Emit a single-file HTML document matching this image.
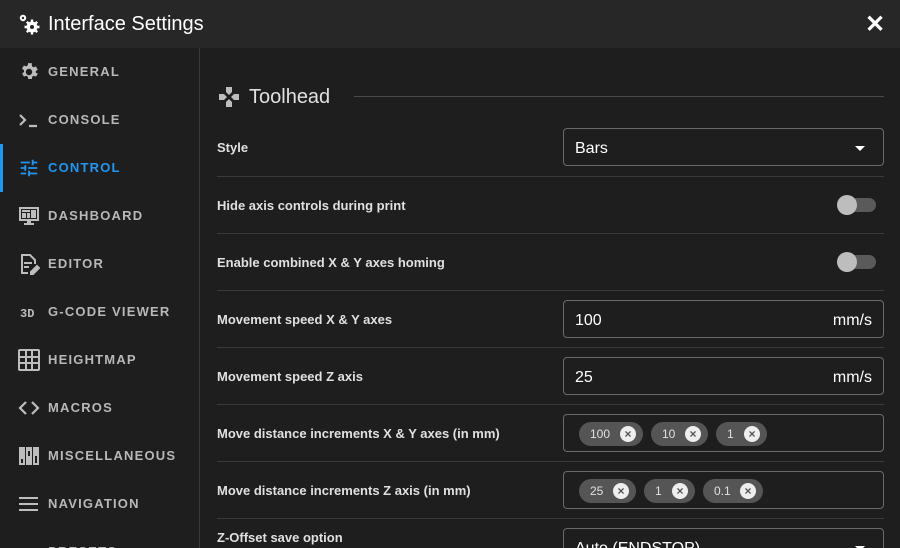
<!DOCTYPE html><html><head><style>
*{box-sizing:border-box;margin:0;padding:0}
html,body{width:900px;height:548px;overflow:hidden}
body{background:#1e1e1e;font-family:"Liberation Sans",sans-serif;color:#fff;position:relative}
.hdr{position:absolute;left:0;top:0;width:900px;height:48px;background:#272727}
.hdr .t{position:absolute;left:48px;top:13px;font-size:20px;color:#fff}
.side{position:absolute;left:0;top:48px;width:200px;height:500px;border-right:1px solid #3a3a3a;overflow:hidden}
.it{position:absolute;left:0;width:200px;height:48px}
.it span{position:absolute;left:48px;top:16px;font-size:13px;font-weight:bold;letter-spacing:1.2px;color:#b8b8b8}
.it svg{position:absolute;left:18px;top:13px}
.act span{color:#2196f3}
.act:before{content:"";position:absolute;left:0;top:0;width:3px;height:48px;background:#2196f3}
.row{position:absolute;left:217px;width:667px;height:57px;border-top:1px solid #3a3a3a}
.row .l{position:absolute;left:0;top:21px;font-size:13px;font-weight:bold;color:#e0e0e0}
.inp{position:absolute;left:346px;top:9px;width:321px;height:38px;border:1px solid #6a6a6a;border-radius:4px;font-size:16px;color:#fff}
.inp .v{position:absolute;left:11px;top:11px}
.inp .u{position:absolute;right:11px;top:11px}
.tog{position:absolute;left:621px;top:21px;width:38px;height:14px;border-radius:7px;background:#5a5a5a}
.tog:after{content:"";position:absolute;left:-1px;top:-3px;width:20px;height:20px;border-radius:50%;background:#bdbdbd}
.chip{position:absolute;top:7px;height:24px;border-radius:12px;background:#555;font-size:12px;color:#e0e0e0;padding:5px 0 0 11px}
.chip i{position:absolute;right:7px;top:4px;width:16px;height:16px;border-radius:50%;background:#eee;color:#555;font-style:normal;font-weight:bold;font-size:12px;text-align:center;line-height:16px}
.arr{position:absolute;right:18px;top:17px;width:0;height:0;border-left:5px solid transparent;border-right:5px solid transparent;border-top:5px solid #fff}
</style></head><body>
<div class="hdr">
<svg style="position:absolute;left:18px;top:13px" width="22" height="22" viewBox="0 0 22 22" fill="#fff"><circle cx="5" cy="5" r="3.2"/><circle cx="5" cy="5" r="1.2" fill="#272727"/><circle cx="14" cy="14" r="5.5"/><g stroke="#fff" stroke-width="2.4"><path d="M14 6.5v15M6.5 14h15M8.8 8.8l10.4 10.4M19.2 8.8L8.8 19.2"/></g><circle cx="14" cy="14" r="2" fill="#272727"/></svg>
<div class="t">Interface Settings</div>
<div style="position:absolute;left:865px;top:10px;font-size:24px;font-weight:bold">✕</div>
</div>
<div class="side">
<div class="it" style="top:0"><svg width="22" height="22" viewBox="0 0 24 24" fill="#bdbdbd"><path d="M12 15.5A3.5 3.5 0 1 1 12 8.5a3.5 3.5 0 0 1 0 7m7.4-2.5a7.8 7.8 0 0 0 0-2l2.1-1.6-2-3.5-2.5 1a7.3 7.3 0 0 0-1.7-1L15 2.3h-4l-.4 2.6a7.3 7.3 0 0 0-1.7 1l-2.5-1-2 3.5L6.6 10a7.8 7.8 0 0 0 0 2l-2.1 1.6 2 3.5 2.5-1c.5.4 1.1.7 1.7 1l.4 2.6h4l.4-2.6c.6-.3 1.2-.6 1.7-1l2.5 1 2-3.5z"/></svg><span>GENERAL</span></div>
<div class="it" style="top:48px"><svg width="22" height="22" viewBox="0 0 22 22" fill="none" stroke="#bdbdbd" stroke-width="2.2"><path d="M2 6l5 5-5 5M11 17h8"/></svg><span>CONSOLE</span></div>
<div class="it act" style="top:96px"><svg width="22" height="22" viewBox="0 0 24 24" fill="#2196f3"><path d="M3 17v2h6v-2H3M3 5v2h10V5H3m10 16v-2h8v-2h-8v-2h-2v6h2M7 9v2H3v2h4v2h2V9H7m14 4v-2H11v2h10m-6-4h2V7h4V5h-4V3h-2v6z"/></svg><span>CONTROL</span></div>
<div class="it" style="top:144px"><svg width="22" height="22" viewBox="0 0 22 22" fill="#bdbdbd"><path d="M1 2h20v14H13v2h3v2H6v-2h3v-2H1zM3 4v10h16V4z"/><rect x="4" y="5" width="8" height="2"/><rect x="4" y="8" width="4" height="5"/><rect x="9" y="8" width="3" height="5"/><rect x="13" y="5" width="5" height="8"/></svg><span>DASHBOARD</span></div>
<div class="it" style="top:192px"><svg width="22" height="22" viewBox="0 0 22 22" fill="none" stroke="#bdbdbd" stroke-width="2"><path d="M10 20H4V2h8l5 5v4M6 10h8M6 14h5"/><path d="M13 19l6-6 2 2-6 6h-2z" fill="#bdbdbd"/></svg><span>EDITOR</span></div>
<div class="it" style="top:240px"><svg width="22" height="22"><text x="2" y="16" font-size="12" font-weight="bold" fill="#bdbdbd" font-family="Liberation Mono">3D</text></svg><span>G-CODE VIEWER</span></div>
<div class="it" style="top:288px"><svg width="22" height="22" viewBox="0 0 22 22" fill="none" stroke="#bdbdbd" stroke-width="2"><rect x="1" y="1" width="20" height="20" rx="1"/><path d="M1 8h20M1 14h20M8 1v20M14 1v20"/></svg><span>HEIGHTMAP</span></div>
<div class="it" style="top:336px"><svg width="22" height="22" viewBox="0 0 22 22" fill="none" stroke="#bdbdbd" stroke-width="2.2"><path d="M8 5l-6 6 6 6M14 5l6 6-6 6"/></svg><span>MACROS</span></div>
<div class="it" style="top:384px"><svg width="22" height="22" viewBox="0 0 22 22" fill="#bdbdbd"><rect x="1" y="2" width="6" height="18"/><rect x="8" y="2" width="6" height="18"/><rect x="15" y="2" width="6" height="18"/><rect x="3" y="14" width="2" height="4" fill="#1e1e1e"/><rect x="10" y="6" width="2" height="5" fill="#1e1e1e"/><rect x="17" y="11" width="2" height="7" fill="#1e1e1e"/></svg><span>MISCELLANEOUS</span></div>
<div class="it" style="top:432px"><svg width="22" height="22" viewBox="0 0 22 22" fill="#bdbdbd"><rect x="1" y="4" width="19" height="2"/><rect x="1" y="10" width="19" height="2"/><rect x="1" y="16" width="19" height="2"/></svg><span>NAVIGATION</span></div>
<div class="it" style="top:480px"><span>PRESETS</span></div>
</div>
<svg style="position:absolute;left:218px;top:86px" width="22" height="22" viewBox="0 0 22 22" fill="#bdbdbd"><path d="M8 1h6v5l-3 3-3-3zM8 21h6v-5l-3-3-3 3zM1 8v6h5l3-3-3-3zM21 8v6h-5l-3-3 3-3z"/></svg>
<div style="position:absolute;left:249px;top:86px;font-size:20px;color:#e0e0e0">Toolhead</div>
<div style="position:absolute;left:354px;top:96px;width:530px;height:1px;background:#4a4a4a"></div>
<div class="row" style="top:119px;border-top:none"><div class="l">Style</div><div class="inp"><span class="v">Bars</span><span class="arr"></span></div></div>
<div class="row" style="top:176px"><div class="l">Hide axis controls during print</div><div class="tog"></div></div>
<div class="row" style="top:233px"><div class="l">Enable combined X &amp; Y axes homing</div><div class="tog"></div></div>
<div class="row" style="top:290px"><div class="l">Movement speed X &amp; Y axes</div><div class="inp"><span class="v">100</span><span class="u">mm/s</span></div></div>
<div class="row" style="top:347px"><div class="l">Movement speed Z axis</div><div class="inp"><span class="v">25</span><span class="u">mm/s</span></div></div>
<div class="row" style="top:404px"><div class="l">Move distance increments X &amp; Y axes (in mm)</div><div class="inp">
<div class="chip" style="left:15px;width:64px">100<i>×</i></div><div class="chip" style="left:87px;width:57px">10<i>×</i></div><div class="chip" style="left:152px;width:51px">1<i>×</i></div></div></div>
<div class="row" style="top:461px"><div class="l">Move distance increments Z axis (in mm)</div><div class="inp">
<div class="chip" style="left:15px;width:57px">25<i>×</i></div><div class="chip" style="left:80px;width:51px">1<i>×</i></div><div class="chip" style="left:139px;width:60px">0.1<i>×</i></div></div></div>
<div class="row" style="top:518px"><div class="l" style="top:11px">Z-Offset save option</div><div class="inp"><span class="v">Auto (ENDSTOP)</span><span class="arr"></span></div></div>
</body></html>
